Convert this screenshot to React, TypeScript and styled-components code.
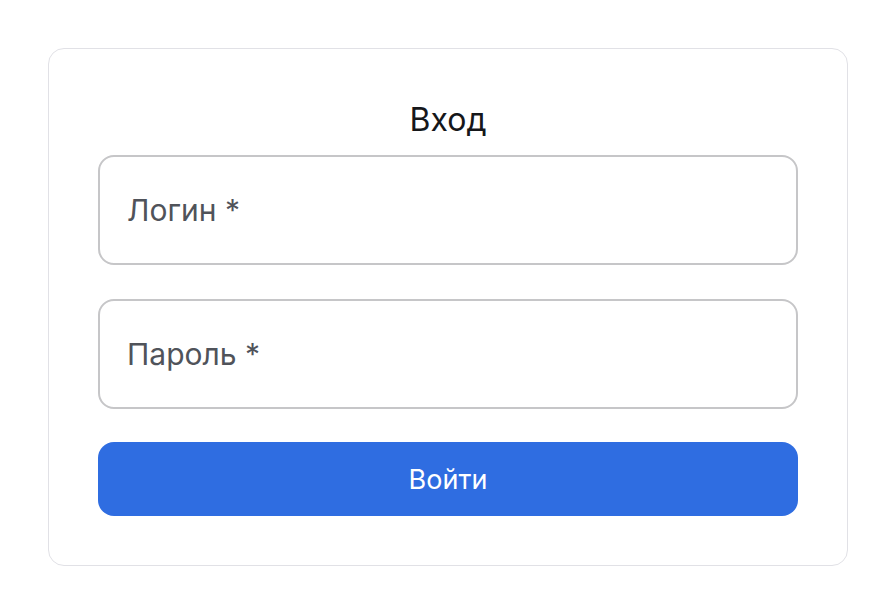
import styled, { createGlobalStyle } from 'styled-components'

// ─── Global ───────────────────────────────────────────────────────────────────

const GlobalStyle = createGlobalStyle`
  html, body {
    margin: 0;
    padding: 0;
    background: #ffffff;
    font-family: Inter, "Noto Sans", "Liberation Sans", sans-serif;
  }
  * { box-sizing: border-box; }
`

// ─── Styled ───────────────────────────────────────────────────────────────────

const Page = styled.main`
  padding: 48px;
`

const Card = styled.form`
  width: 800px;
  border: 1.5px solid #e1e1e6;
  border-radius: 16px;
  padding: 52px 49px 49px;
  display: flex;
  flex-direction: column;
`

const Title = styled.h1`
  margin: 0 0 16px;
  text-align: center;
  font-size: 32px;
  line-height: 38px;
  font-weight: 400;
  color: #16171a;
`

const Fields = styled.div`
  display: flex;
  flex-direction: column;
  gap: 34px;
`

const Input = styled.input`
  height: 110px;
  width: 100%;
  border: 2px solid #c6c6c8;
  border-radius: 16px;
  padding: 0 27px;
  font-family: inherit;
  font-size: 30px;
  color: #16171a;
  background: #fff;
  outline: none;

  &::placeholder {
    color: #50535a;
  }
`

const SubmitButton = styled.button`
  margin-top: 33px;
  height: 74px;
  width: 100%;
  border: none;
  border-radius: 16px;
  background: #2f6de1;
  color: #ffffff;
  font-family: inherit;
  font-size: 27px;
  cursor: pointer;
`

// ─── Componente ───────────────────────────────────────────────────────────────

export default function App() {
  return (
    <>
      <GlobalStyle />
      <Page>
        <Card onSubmit={e => e.preventDefault()}>
          <Title>Вход</Title>
          <Fields>
            <Input type="text" placeholder="Логин *" />
            <Input type="password" placeholder="Пароль *" />
          </Fields>
          <SubmitButton type="submit">Войти</SubmitButton>
        </Card>
      </Page>
    </>
  )
}
